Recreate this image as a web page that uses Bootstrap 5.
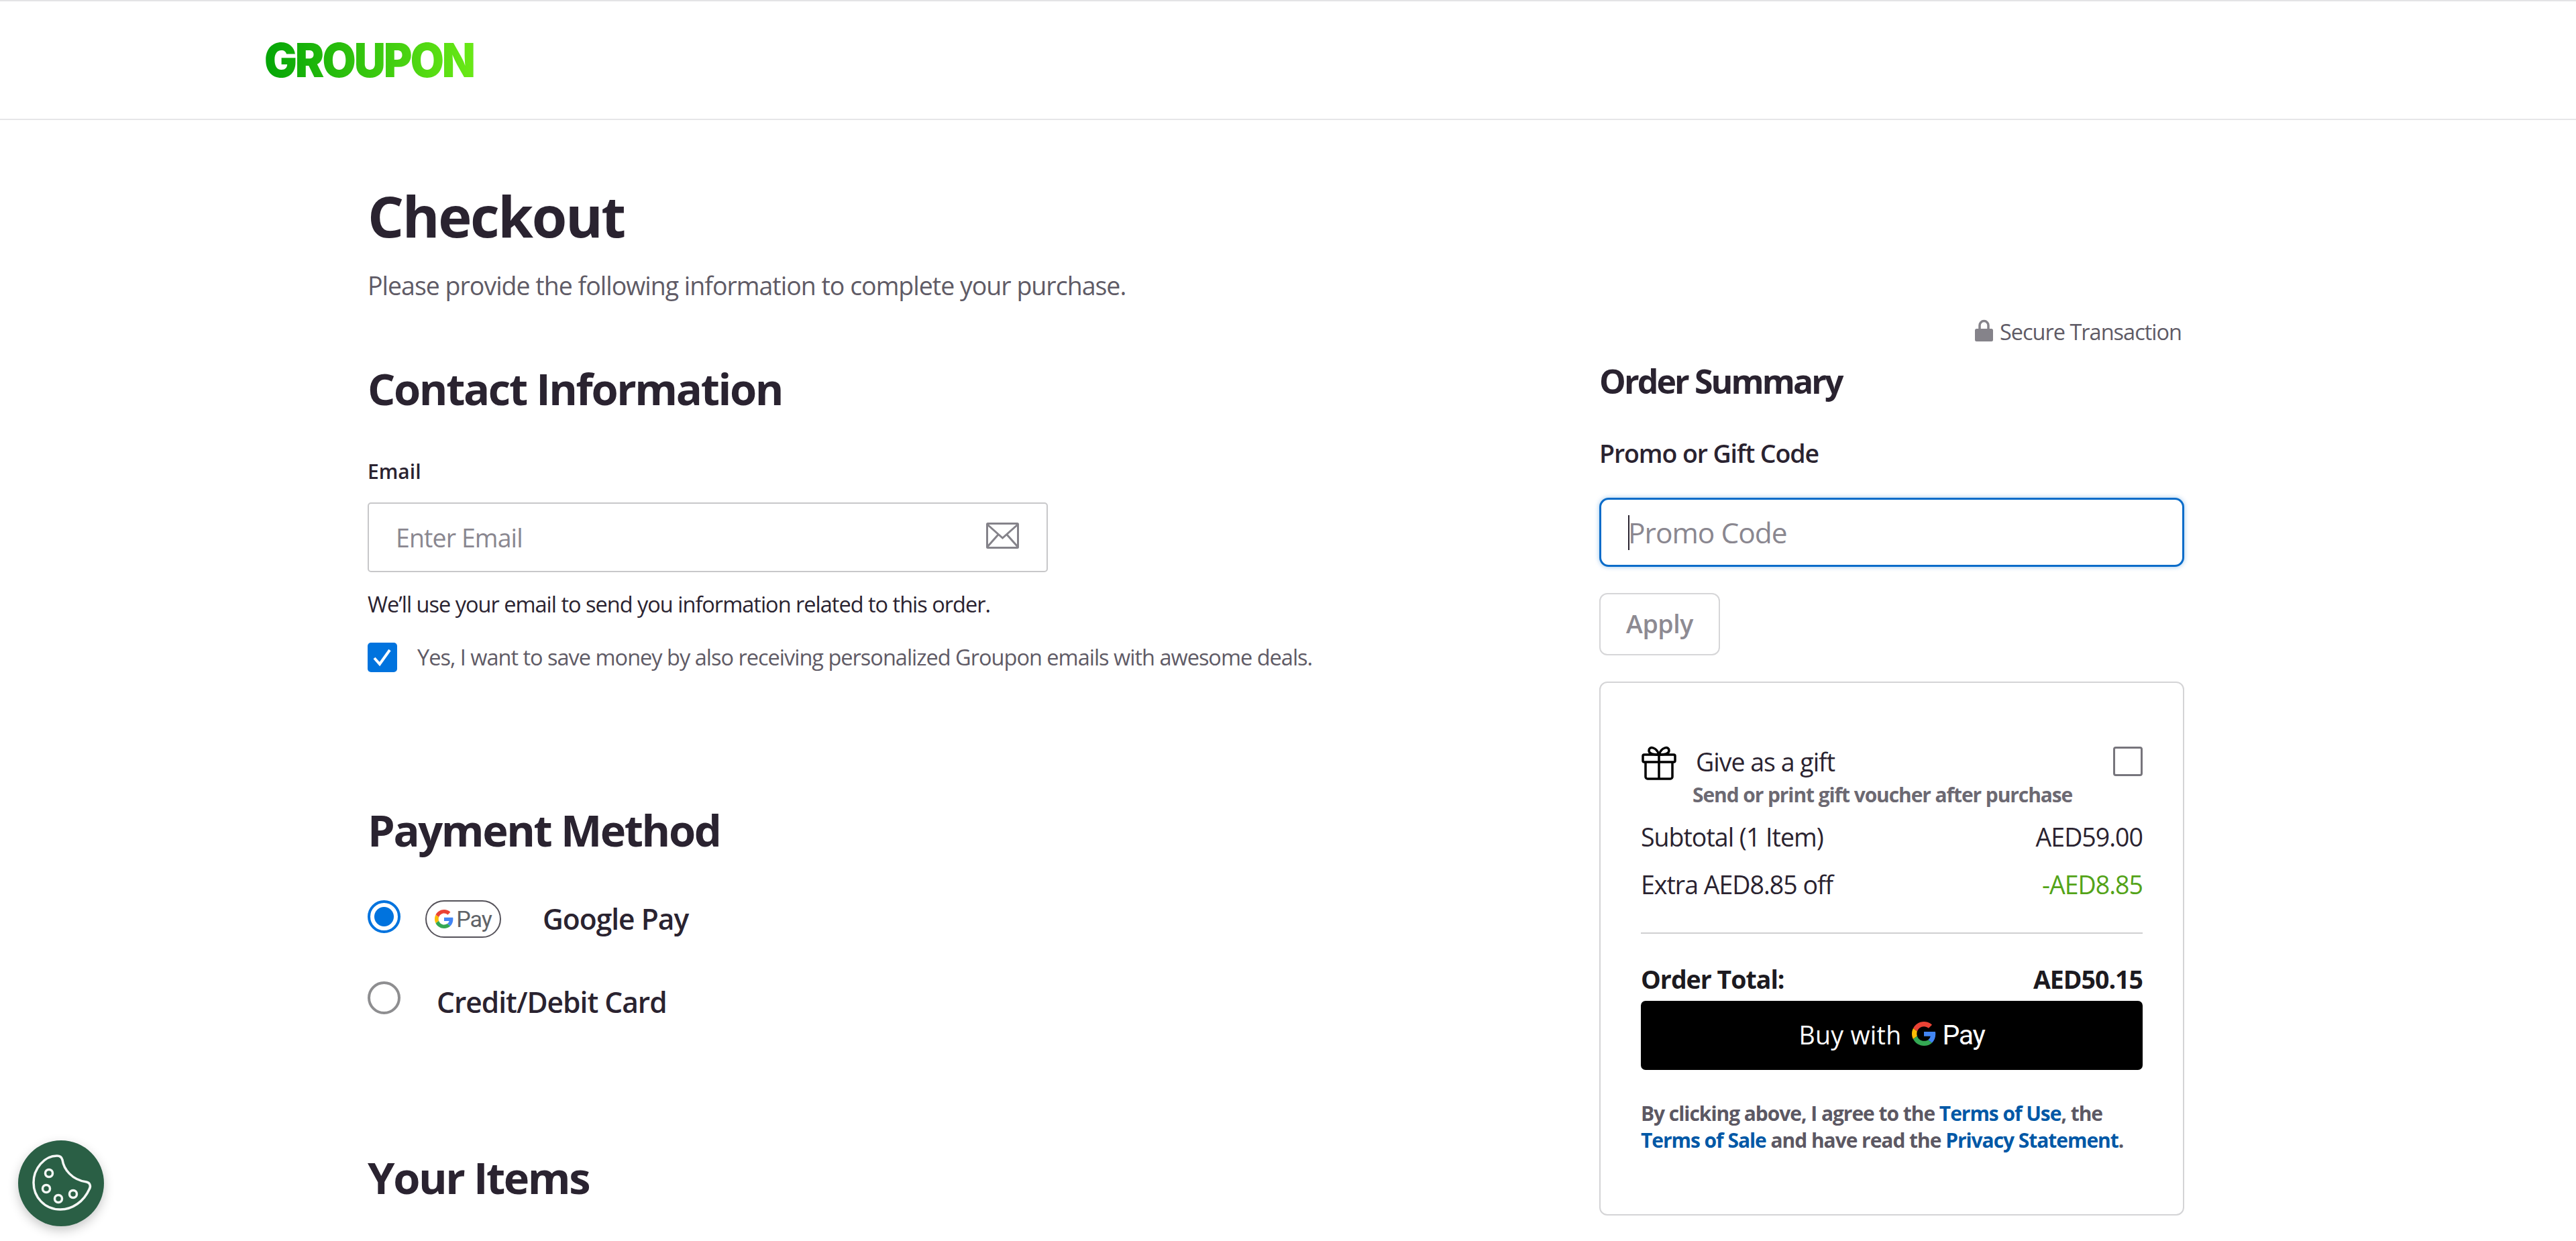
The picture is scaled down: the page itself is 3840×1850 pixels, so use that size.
<!DOCTYPE html>
<html lang="en">
<head>
<meta charset="utf-8">
<title>Checkout</title>
<link href="https://cdn.jsdelivr.net/npm/bootstrap@5.3.0/dist/css/bootstrap.min.css" rel="stylesheet">
<style>
body{font-family:"Open Sans","Noto Sans",sans-serif;color:#2a2330;background:#fff;overflow:hidden;height:1850px;letter-spacing:-1px}
.site-top{height:179px;border-top:2px solid #e3e3e5;border-bottom:2px solid #e6e6e8;padding-left:394px}
.brand-word{font-family:Inter,"Liberation Sans",sans-serif;font-weight:900;font-size:70px;line-height:1;letter-spacing:-3px;background:linear-gradient(90deg,#04a507,#6ae916);-webkit-background-clip:text;background-clip:text;color:transparent;display:inline-block;transform:scaleX(.925);transform-origin:left center}
.page-wrap{padding-left:548px;width:3256px;box-sizing:content-box}
.page-title{font-size:85px;font-weight:700;line-height:100px;margin:92px 0 0;letter-spacing:-2.4px}
.page-sub{font-size:37.5px;line-height:50px;margin:30px 0 0;color:#5f5b66}
.left-col{width:1836px;flex:none}
.right-col{width:872px;flex:none}
.sec-head{font-size:65px;font-weight:700;line-height:60px;margin:0;letter-spacing:-2.4px}
.first-head{margin-top:98px}
.field-label{font-size:30px;font-weight:600;line-height:30px;margin:79px 0 0;display:block;letter-spacing:0}
.field-wrap{width:1014px;margin-top:31px}
.email-input.form-control{height:104px;border:2px solid #c8c8ca;border-radius:5px;font-size:37.5px;padding:0 40px;color:#2a2330;letter-spacing:-.9px}
.email-input::placeholder,.promo-input::placeholder{color:#8a8790;opacity:1}
.mail-icon{position:absolute;right:43px;top:30px;width:49px;height:39px}
.helper{font-size:32.5px;line-height:40px;margin:28px 0 0}
.opt-row{margin-top:37px;gap:30px}
.form-check-input.tick-box{width:44px;height:44px;margin:0;border-radius:5px;background-color:#0073de;border:0;flex:none;background-size:100%;background-image:url("data:image/svg+xml,%3csvg xmlns='http://www.w3.org/2000/svg' viewBox='0 0 44 44'%3e%3cpath fill='none' stroke='%23fff' stroke-width='4' d='M10 23l8 9 15-21'/%3e%3c/svg%3e")}
.opt-text{font-size:32.5px;line-height:44px;color:#5f5b66}
.pay-head{margin-top:205px}
.pay-row{font-size:42.5px;font-weight:600;line-height:56px}
.pay-row.one{margin-top:75px}
.pay-row.two{margin-top:65px}
.form-check-input.rad{width:49px;height:49px;margin:0;flex:none;background-color:#fff;background-image:none;border:4px solid #8e8e90}
.form-check-input.rad.on{border:4.5px solid #0073de;background:radial-gradient(circle,#0073de 0 14px,#fff 15px)}
.gp-pill{margin-left:37px;margin-right:62px;width:113px;height:56px;border:2.5px solid #55525a;border-radius:28px;font-family:Roboto,sans-serif;font-size:34px;font-weight:400;color:#5f6368;gap:4px;letter-spacing:-1px}
.gp-pill svg{width:28px;height:28px}
.pay-label-two{margin:3px 0 0 54px}
.items-head{margin-top:203px}
.secure{font-size:32.5px;line-height:40px;margin-top:24px;color:#5f5b66;gap:10px;padding-right:4px}
.lock{width:27px;height:33px;margin-top:-6px}
.sum-head{font-size:50px;font-weight:700;line-height:50px;margin:28px 0 0;letter-spacing:-2.9px}
.promo-label{font-size:37.5px;font-weight:600;line-height:40px;margin:63px 0 0;display:block;letter-spacing:-1.1px}
.promo-box{margin-top:46px}
.promo-input.form-control{height:103px;border:3px solid #0a6cc9;border-radius:14px;font-size:42.5px;padding:0 40px;box-shadow:0 0 7px rgba(10,112,207,.4);color:#2a2330;letter-spacing:-1px}
.caret-line{position:absolute;left:43px;top:26px;width:2px;height:52px;background:#2a2330}
.apply-btn.btn{display:block;margin-top:39px;width:180px;height:93px;padding:0;border:2.5px solid #d6d6d8;border-radius:12px;font-size:37.5px;font-weight:600;color:#8d8a92;background:#fff;letter-spacing:-.4px}
.sum-card.card{margin-top:39px;height:796px;border:2.5px solid #d4d4d6;border-radius:12px;padding:94px 60px 0;--bs-card-bg:#fff}
.gift-row{height:50px}
.gift-ico{width:54px;height:54px;flex:none}
.gift-text{font-size:37.5px;line-height:50px;margin:-3px 0 0 28px}
.form-check-input.gift-box{width:44px;height:44px;margin:-4px 0 0 auto;border:3px solid #77757c;border-radius:4px;flex:none}
.gift-sub{font-size:30px;font-weight:700;line-height:40px;color:#6c6972;margin:3px 0 0 77px;letter-spacing:-1.1px}
.line-row{font-size:37.5px;line-height:50px}
.line-row.a{margin-top:18px}
.line-row.b{margin-top:21px}
.green-amt{color:#53a318}
.rule-line{margin:46px 0 0;border:0;border-top:2.5px solid #cfcfd1;opacity:1}
.total-row{font-size:37.5px;font-weight:700;line-height:50px;margin-top:43px;color:#1c1a20}
.gpay-btn.btn{display:flex;align-items:center;justify-content:center;width:100%;height:103px;margin-top:7px;background:#000;color:#fff;border:0;border-radius:7px;font-size:37.5px;padding:0;letter-spacing:.3px}
.gpay-btn svg{width:36px;height:36px;margin:0 10px 6px 15px}
.gpay-word{font-family:Roboto,sans-serif;font-size:41px;letter-spacing:-1.4px}
.terms{font-size:30px;font-weight:700;line-height:40px;margin:45px 0 0;color:#5c5863;letter-spacing:-1.05px}
.terms a{color:#0058a6;text-decoration:none}
.cookie-fab{position:fixed;left:27px;top:1700px;width:128px;height:128px;border-radius:50%;background:#2a5f45;border:0;padding:0;box-shadow:0 6px 16px rgba(0,0,0,.22)}
.cookie-fab svg{width:128px;height:128px;display:block}
</style>
</head>
<body>
<header class="site-top d-flex align-items-center">
  <span class="brand-word">GROUPON</span>
</header>
<main class="page-wrap">
  <h1 class="page-title">Checkout</h1>
  <p class="page-sub">Please provide the following information to complete your purchase.</p>
  <div class="d-flex">
    <section class="left-col">
      <h2 class="sec-head first-head">Contact Information</h2>
      <label class="field-label" for="em">Email</label>
      <div class="field-wrap position-relative">
        <input id="em" class="form-control email-input" type="email" placeholder="Enter Email">
        <svg class="mail-icon" viewBox="0 0 49 39" fill="none" stroke="#85838a" stroke-width="3"><rect x="1.5" y="1.5" width="46" height="36" rx="1"/><path d="M2 3l22.5 20L47 3M2 36l16-18M47 36L31 18"/></svg>
      </div>
      <p class="helper">We’ll use your email to send you information related to this order.</p>
      <div class="d-flex align-items-center opt-row">
        <input class="form-check-input tick-box" type="checkbox" checked>
        <span class="opt-text">Yes, I want to save money by also receiving personalized Groupon emails with awesome deals.</span>
      </div>
      <h2 class="sec-head pay-head">Payment Method</h2>
      <div class="d-flex align-items-start pay-row one">
        <input class="form-check-input rad on" type="radio" name="pm" checked>
        <span class="gp-pill d-flex align-items-center justify-content-center">
          <svg viewBox="0 0 48 48"><path fill="#EA4335" d="M24 9.5c3.54 0 6.71 1.22 9.21 3.6l6.85-6.85C35.9 2.38 30.47 0 24 0 14.62 0 6.51 5.38 2.56 13.22l7.98 6.19C12.43 13.72 17.74 9.5 24 9.5z"/><path fill="#4285F4" d="M46.98 24.55c0-1.57-.15-3.09-.38-4.55H24v9.02h12.94c-.58 2.96-2.26 5.48-4.78 7.18l7.73 6c4.51-4.18 7.09-10.36 7.09-17.65z"/><path fill="#FBBC05" d="M10.53 28.59c-.48-1.45-.76-2.99-.76-4.59s.27-3.14.76-4.59l-7.98-6.19C.92 16.46 0 20.12 0 24c0 3.88.92 7.54 2.56 10.78l7.97-6.19z"/><path fill="#34A853" d="M24 48c6.48 0 11.93-2.13 15.89-5.81l-7.73-6c-2.15 1.45-4.92 2.3-8.16 2.3-6.26 0-11.57-4.22-13.47-9.91l-7.98 6.19C6.51 42.62 14.62 48 24 48z"/></svg>Pay</span>
        <span>Google Pay</span>
      </div>
      <div class="d-flex align-items-start pay-row two">
        <input class="form-check-input rad" type="radio" name="pm">
        <span class="pay-label-two">Credit/Debit Card</span>
      </div>
      <h2 class="sec-head items-head">Your Items</h2>
    </section>
    <aside class="right-col">
      <div class="secure d-flex justify-content-end align-items-center">
        <svg class="lock" viewBox="0 0 27 33"><path fill="none" stroke="#85838a" stroke-width="3.5" d="M7 16V9a6.5 6.5 0 0 1 13 0v7"/><rect y="14" width="27" height="19" rx="2.5" fill="#85838a"/></svg>
        <span>Secure Transaction</span>
      </div>
      <h3 class="sum-head">Order Summary</h3>
      <label class="promo-label" for="pc">Promo or Gift Code</label>
      <div class="promo-box position-relative">
        <input id="pc" class="form-control promo-input" type="text" placeholder="Promo Code">
        <span class="caret-line"></span>
      </div>
      <button class="btn apply-btn" type="button">Apply</button>
      <div class="card sum-card">
        <div class="d-flex align-items-center gift-row">
          <svg class="gift-ico" viewBox="0 0 54 54" fill="none" stroke="#000" stroke-width="3.5" stroke-linejoin="round"><rect x="3" y="15" width="48" height="11" rx="2"/><path d="M7 26v22a3 3 0 0 0 3 3h34a3 3 0 0 0 3-3V26M27 15v36M27 15c-4-12-15-13-15-6 0 5 7 6 15 6zM27 15c4-12 15-13 15-6 0 5-7 6-15 6z"/></svg>
          <span class="gift-text">Give as a gift</span>
          <input class="form-check-input gift-box" type="checkbox">
        </div>
        <p class="gift-sub">Send or print gift voucher after purchase</p>
        <div class="d-flex justify-content-between line-row a"><span>Subtotal (1 Item)</span><span>AED59.00</span></div>
        <div class="d-flex justify-content-between line-row b"><span>Extra AED8.85 off</span><span class="green-amt">-AED8.85</span></div>
        <hr class="rule-line">
        <div class="d-flex justify-content-between total-row"><span>Order Total:</span><span>AED50.15</span></div>
        <button class="btn gpay-btn" type="button">Buy with
          <svg viewBox="0 0 48 48"><path fill="#EA4335" d="M24 9.5c3.54 0 6.71 1.22 9.21 3.6l6.85-6.85C35.9 2.38 30.47 0 24 0 14.62 0 6.51 5.38 2.56 13.22l7.98 6.19C12.43 13.72 17.74 9.5 24 9.5z"/><path fill="#4285F4" d="M46.98 24.55c0-1.57-.15-3.09-.38-4.55H24v9.02h12.94c-.58 2.96-2.26 5.48-4.78 7.18l7.73 6c4.51-4.18 7.09-10.36 7.09-17.65z"/><path fill="#FBBC05" d="M10.53 28.59c-.48-1.45-.76-2.99-.76-4.59s.27-3.14.76-4.59l-7.98-6.19C.92 16.46 0 20.12 0 24c0 3.88.92 7.54 2.56 10.78l7.97-6.19z"/><path fill="#34A853" d="M24 48c6.48 0 11.93-2.13 15.89-5.81l-7.73-6c-2.15 1.45-4.92 2.3-8.16 2.3-6.26 0-11.57-4.22-13.47-9.91l-7.98 6.19C6.51 42.62 14.62 48 24 48z"/></svg><span class="gpay-word">Pay</span></button>
        <p class="terms">By clicking above, I agree to the <a href="#">Terms of Use</a>, the <a href="#">Terms of Sale</a> and have read the <a href="#">Privacy Statement</a>.</p>
      </div>
    </aside>
  </div>
</main>
<button class="cookie-fab" type="button" aria-label="Cookie settings">
  <svg viewBox="0 0 128 128" fill="none" stroke="#f4f7f5" stroke-width="3.5"><path d="M58 23c4 0 7 2 8 6 2 14 14 30 36 33 5 1 7 6 4 11-8 18-25 30-43 30-24 0-40-19-40-40 0-21 16-40 35-40z"/><circle cx="46" cy="49" r="5.5"/><circle cx="42" cy="72" r="5.5"/><circle cx="60" cy="87" r="5.5"/><circle cx="82" cy="80" r="5.5"/></svg>
</button>
<script src="https://cdn.jsdelivr.net/npm/bootstrap@5.3.0/dist/js/bootstrap.bundle.min.js"></script>
</body>
</html>
